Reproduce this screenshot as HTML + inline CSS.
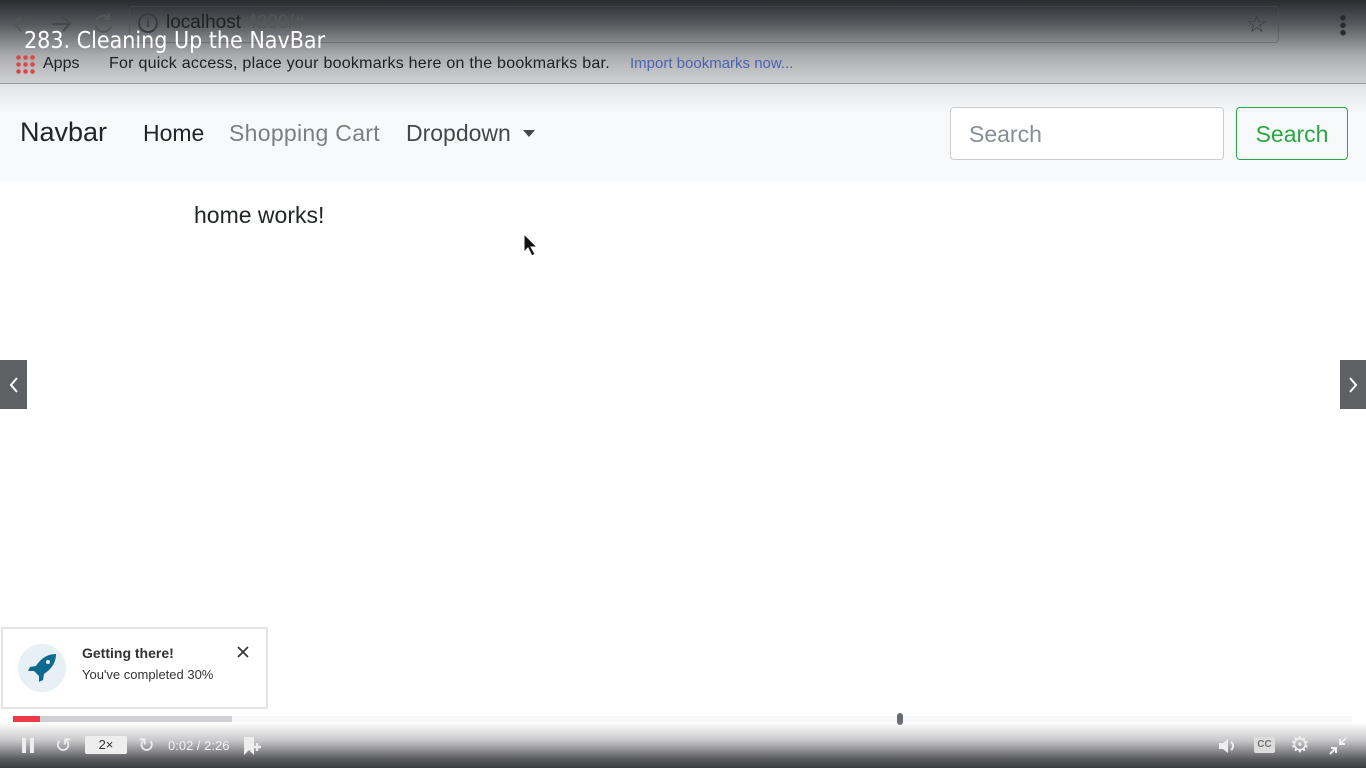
<!DOCTYPE html>
<html><head><meta charset="utf-8"><style>
*{margin:0;padding:0;box-sizing:border-box}
body{width:1366px;height:768px;overflow:hidden;background:#fff;font-family:"Liberation Sans",sans-serif;position:relative}
.abs{position:absolute}
#top{left:0;top:0;width:1366px;height:84px;background:linear-gradient(#2a2b30 0%,#5a5b60 30%,#a9aaad 65%,#d2d3d5 100%)}
#nav{left:0;top:84px;width:1366px;height:98px;background:linear-gradient(#e2e3e5 0px,#f8f9fa 30px,#f8f9fa)}
#bot{left:0;top:722px;width:1366px;height:46px;background:linear-gradient(rgba(255,255,255,0),#c8c8ca 40%,#5c5d61 80%,#3a3b3f)}
</style></head><body>
<div id="top" class="abs"></div>
<div class="abs" style="left:129px;top:6px;width:1150px;height:37px;border:1px solid rgba(80,80,85,.5);border-radius:4px"></div>
<svg class="abs" style="left:10px;top:12px" width="110" height="24" viewBox="0 0 110 24" fill="none" stroke-width="2"><path d="M22 12H4M11 5L4 12L11 19" stroke="#55565a"/><path d="M42 12H60M53 5L60 12L53 19" stroke="#46474b"/><path d="M99 6A8 8 0 1 0 101 14M99 2V7H94" stroke="#55565a"/></svg>
<div class="abs" style="left:138px;top:13px;width:20px;height:20px;border:2px solid #3a3b40;border-radius:50%;font-size:12px;text-align:center;color:#3a3b40;font-weight:bold;line-height:16px">i</div>
<div class="abs" style="left:166px;top:12px;font-size:19px;color:#202124">localhost<span style="color:#55565a">:4200/#</span></div>
<div class="abs" style="left:1246px;top:10px;font-size:24px;color:#3a3b40">☆</div>
<div class="abs" style="left:1340px;top:14px;width:6px;height:22px;background:radial-gradient(circle,#2a2b30 2.5px,transparent 3px) 0 0/6px 7.5px"></div>
<div class="abs" style="left:24px;top:28px;font-size:23px;color:#fff;font-family:'DejaVu Sans Condensed','Liberation Sans',sans-serif;font-weight:300">283. Cleaning Up the NavBar</div>
<div class="abs" style="left:15px;top:54px;width:20px;height:20px;background:radial-gradient(circle,#d44 2px,transparent 2.5px) 0 0/7px 7px"></div>
<div class="abs" style="left:43px;top:55px;font-size:16px;color:#202124">Apps</div>
<div class="abs" style="left:109px;top:55px;font-size:16px;color:#202124;letter-spacing:0.25px">For quick access, place your bookmarks here on the bookmarks bar.</div>
<div class="abs" style="left:630px;top:55px;font-size:15px;color:#4a64b4">Import bookmarks now...</div>
<div class="abs" style="left:0;top:83px;width:1366px;height:1px;background:#999"></div>
<div id="nav" class="abs"></div>
<div class="abs" style="left:20px;top:117px;font-size:27px;color:#212529">Navbar</div>
<div class="abs" style="left:143px;top:120px;font-size:23px;color:#212529">Home</div>
<div class="abs" style="left:229px;top:120px;font-size:23px;color:#7d7e80;letter-spacing:0.3px">Shopping Cart</div>
<div class="abs" style="left:406px;top:120px;font-size:23px;color:#45474a">Dropdown</div>
<div class="abs" style="left:523px;top:130px;width:0;height:0;border-left:6px solid transparent;border-right:6px solid transparent;border-top:7px solid #45474a"></div>
<div class="abs" style="left:950px;top:107px;width:274px;height:53px;border:1px solid #ccc;border-radius:4px;background:#fff;font-size:23px;color:#868e96;padding:13px 0 0 18px">Search</div>
<div class="abs" style="left:1236px;top:107px;width:112px;height:53px;border:1px solid #28a745;border-radius:4px;font-size:23px;color:#28a745;text-align:center;padding-top:13px">Search</div>
<div class="abs" style="left:194px;top:202px;font-size:23px;color:#212529">home works!</div>
<svg class="abs" style="left:522px;top:232px" width="18" height="26"><path d="M2 2 L2 20 L6 16 L10 24 L13 22 L9 15 L15 15 Z" fill="#111" stroke="#fff" stroke-width="1"/></svg>
<div class="abs" style="left:0;top:360px;width:27px;height:49px;background:#5f6064"></div>
<svg class="abs" style="left:7px;top:376px" width="14" height="18"><path d="M10 2L4 9L10 16" stroke="#fff" stroke-width="2" fill="none"/></svg>
<div class="abs" style="left:1340px;top:360px;width:26px;height:49px;background:#5f6064"></div>
<svg class="abs" style="left:1346px;top:376px" width="14" height="18"><path d="M4 2L10 9L4 16" stroke="#fff" stroke-width="2" fill="none"/></svg>
<div class="abs" style="left:1px;top:627px;width:267px;height:82px;border:2px solid #e3e3e3;background:#fff"></div>
<div class="abs" style="left:18px;top:644px;width:48px;height:48px;border-radius:50%;background:#e6f0f5"></div>
<svg class="abs" style="left:26px;top:652px" width="32" height="32" viewBox="0 0 32 32"><path d="M30 2 C20 2 14 8 10 14 L4 15 L2 19 L8 19 L13 24 L13 30 L17 28 L18 22 C24 18 30 12 30 2Z" fill="#0f6a8f"/><circle cx="22" cy="10" r="2" fill="#e6f0f5"/></svg>
<div class="abs" style="left:82px;top:645px;font-size:14px;font-weight:bold;color:#333">Getting there!</div>
<div class="abs" style="left:82px;top:667px;font-size:13px;color:#333">You've completed 30%</div>
<svg class="abs" style="left:236px;top:645px" width="14" height="14"><path d="M2 2L12 12M12 2L2 12" stroke="#333" stroke-width="1.6"/></svg>
<div class="abs" style="left:13px;top:716px;width:1339px;height:6px;background:#f7f8fa"></div>
<div class="abs" style="left:13px;top:716px;width:219px;height:6px;background:#cfd0d3"></div>
<div class="abs" style="left:13px;top:716px;width:27px;height:6px;background:#ec3b45"></div>
<div class="abs" style="left:897px;top:713px;width:6px;height:12px;border-radius:3px;background:#6a6b70"></div>
<div id="bot" class="abs"></div>
<div class="abs" style="left:22px;top:738px;width:4px;height:15px;background:#eee"></div>
<div class="abs" style="left:30px;top:738px;width:4px;height:15px;background:#eee"></div>
<div class="abs" style="left:55px;top:733px;font-size:20px;color:#eee">↺</div>
<div class="abs" style="left:85px;top:736px;width:42px;height:18px;background:#eee;border-radius:2px;font-size:13px;color:#333;text-align:center;line-height:18px">2×</div>
<div class="abs" style="left:138px;top:733px;font-size:20px;color:#eee">↻</div>
<div class="abs" style="left:168px;top:738px;font-size:13px;color:#f2f2f2">0:02 / 2:26</div>
<svg class="abs" style="left:242px;top:735px" width="22" height="22"><path d="M2 2H12V20L7 15L2 20Z" fill="#eee"/><path d="M15 8V16M11 12H19" stroke="#eee" stroke-width="2.5"/></svg>
<svg class="abs" style="left:1217px;top:737px" width="22" height="18"><path d="M2 6H6L11 2V16L6 12H2Z" fill="#eee"/><path d="M14 5A5 5 0 0 1 14 13" stroke="#eee" stroke-width="2" fill="none"/></svg>
<div class="abs" style="left:1254px;top:737px;width:21px;height:16px;background:#ddd;border-radius:2px;font-size:10px;color:#777;text-align:center;line-height:16px;font-weight:bold">CC</div>
<div class="abs" style="left:1290px;top:732px;font-size:22px;color:#eee">⚙</div>
<svg class="abs" style="left:1328px;top:736px" width="20" height="20"><path d="M18 2L12 8M12 3V8H17M2 18L8 12M3 12H8V17" stroke="#eee" stroke-width="2" fill="none"/></svg>
</body></html>
